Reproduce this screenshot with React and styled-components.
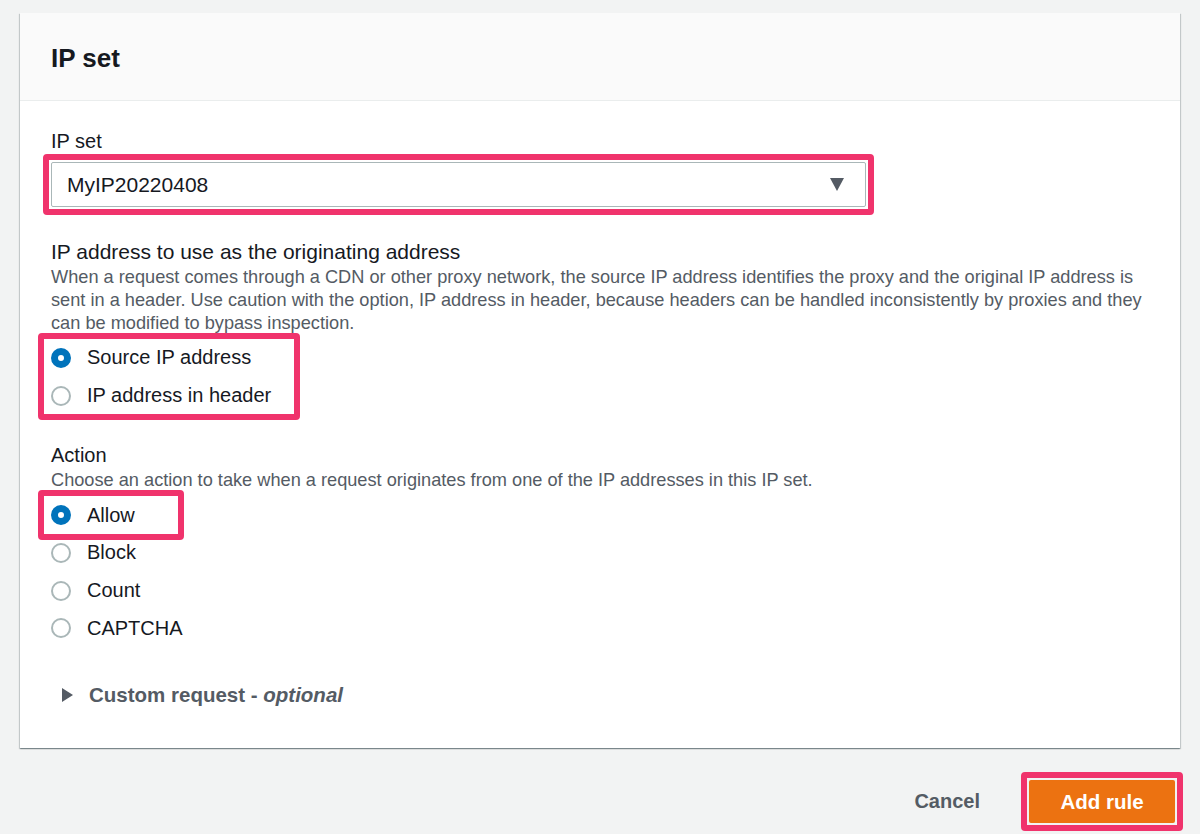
import styled, { createGlobalStyle } from "styled-components";

const GlobalStyle = createGlobalStyle`
  html, body {
    margin: 0;
    padding: 0;
    background: #f2f3f3;
  }
  body {
    font-family: "Liberation Sans", Arial, sans-serif;
    color: #16191f;
  }
`;

const Page = styled.div`
  width: 1200px;
  height: 834px;
  padding: 13px 20px 0;
  box-sizing: border-box;
  overflow: hidden;
`;

const Panel = styled.div`
  background: #fff;
  box-shadow: 0 1px 1px 0 rgba(0, 28, 36, 0.3),
    1px 1px 1px 0 rgba(0, 28, 36, 0.15), -1px 1px 1px 0 rgba(0, 28, 36, 0.15);
  height: 735px;
  box-sizing: border-box;
`;

const Header = styled.div`
  height: 88px;
  background: #fafafa;
  border-bottom: 1px solid #eaeded;
  display: flex;
  align-items: center;
  padding: 4px 31px 0;
  box-sizing: border-box;
  h2 {
    margin: 0;
    font-size: 26px;
    font-weight: 700;
  }
`;

const Body = styled.div`
  padding: 28px 31px 0;
  display: flex;
  flex-direction: column;
`;

const Label = styled.div`
  font-size: ${(p) => p.$size || 20}px;
  line-height: 24px;
  margin-top: ${(p) => p.$top || 0}px;
`;

const Description = styled.p`
  margin: 2px 0 0;
  font-size: 18.2px;
  line-height: 23px;
  color: #545b64;
`;

const Highlight = styled.div`
  align-self: flex-start;
  border: 6px solid #f0336c;
  border-radius: 4px;
  box-sizing: border-box;
  margin: ${(p) => p.$margin};
  padding: ${(p) => p.$padding || "0"};
  width: ${(p) => (p.$width ? `${p.$width}px` : "auto")};
`;

const Select = styled.div`
  width: 815px;
  height: 45px;
  box-sizing: border-box;
  border: 1px solid #aab7b8;
  border-radius: 2px;
  background: #fff;
  display: flex;
  align-items: center;
  justify-content: space-between;
  padding: 0 21px 0 15px;
  font-size: 21px;
`;

const Caret = styled.span`
  width: 0;
  height: 0;
  border-left: 7.5px solid transparent;
  border-right: 7.5px solid transparent;
  border-top: 13px solid #545b64;
`;

const RadioRow = styled.label`
  display: flex;
  align-items: center;
  height: 37.7px;
  gap: 16px;
  font-size: 20px;
`;

const RadioDot = styled.span`
  width: 20px;
  height: 20px;
  box-sizing: border-box;
  border-radius: 50%;
  background: #fff;
  border: ${(p) => (p.$checked ? "7px solid #0073bb" : "2px solid #aab7b8")};
  flex-shrink: 0;
`;

const Expander = styled.div`
  display: flex;
  align-items: center;
  gap: 16px;
  margin-top: 36px;
  padding-left: 11px;
  font-size: 20.5px;
  line-height: 24px;
  font-weight: 700;
  color: #545b64;
  i {
    font-weight: 700;
  }
`;

const Arrow = styled.span`
  width: 0;
  height: 0;
  border-top: 7px solid transparent;
  border-bottom: 7px solid transparent;
  border-left: 11px solid #545b64;
`;

const Footer = styled.div`
  display: flex;
  justify-content: flex-end;
  align-items: center;
  gap: 41px;
  padding: 24px 0 0;
  margin-right: -3px;
`;

const LinkButton = styled.button`
  background: none;
  border: none;
  font-family: inherit;
  font-size: 20px;
  font-weight: 700;
  color: #545b64;
  padding: 0;
`;

const PrimaryButton = styled.button`
  width: 146px;
  height: 43px;
  background: #ec7211;
  border: none;
  border-radius: 2px;
  color: #fff;
  font-family: inherit;
  font-size: 20.5px;
  font-weight: 700;
`;

const Radio = ({ label, checked }) => (
  <RadioRow>
    <RadioDot $checked={checked} />
    {label}
  </RadioRow>
);

const App = () => {
  return (
    <Page>
      <GlobalStyle />
      <Panel>
        <Header>
          <h2>IP set</h2>
        </Header>
        <Body>
          <Label>IP set</Label>
          <Highlight $margin="1px 0 -8px -8px" $padding="2px">
            <Select>
              MyIP20220408
              <Caret />
            </Select>
          </Highlight>

          <Label $top={33} $size={21}>
            IP address to use as the originating address
          </Label>
          <Description>
            When a request comes through a CDN or other proxy network, the
            source IP address identifies the proxy and the original IP address
            is sent in a header. Use caution with the option, IP address in
            header, because headers can be handled inconsistently by proxies
            and they can be modified to bypass inspection.
          </Description>
          <Highlight
            $margin="-2px 0 -6px -13px"
            $padding="0 0 0 7px"
            $width={262}
          >
            <Radio label="Source IP address" checked />
            <Radio label="IP address in header" />
          </Highlight>

          <Label $top={29}>Action</Label>
          <Description>
            Choose an action to take when a request originates from one of the
            IP addresses in this IP set.
          </Description>
          <Highlight
            $margin="-2px 0 -6px -13px"
            $padding="0 0 0 7px"
            $width={146}
          >
            <Radio label="Allow" checked />
          </Highlight>
          <Radio label="Block" />
          <Radio label="Count" />
          <Radio label="CAPTCHA" />

          <Expander>
            <Arrow />
            <span>
              Custom request - <i>optional</i>
            </span>
          </Expander>
        </Body>
      </Panel>
      <Footer>
        <LinkButton>Cancel</LinkButton>
        <Highlight $margin="0" $padding="2px">
          <PrimaryButton>Add rule</PrimaryButton>
        </Highlight>
      </Footer>
    </Page>
  );
};

export default App;
